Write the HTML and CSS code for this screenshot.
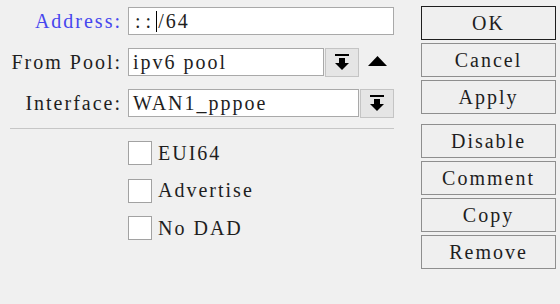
FILE: index.html
```html
<!DOCTYPE html>
<html>
<head>
<meta charset="utf-8">
<link rel="stylesheet" href="styles.css">
</head>
<body>
<div class="window">
  <div class="form">
    <div class="row">
      <div class="label label-active">Address:</div>
      <div class="input input-address"><span class="colons">::</span><span class="caret"></span>/64</div>
    </div>
    <div class="row">
      <div class="label">From Pool:</div>
      <div class="input input-pool">ipv6 pool</div>
      <div class="drop"><svg width="14" height="17" viewBox="0 0 14 17"><rect x="0" y="0" width="14" height="2" fill="#000"/><rect x="4" y="4" width="6" height="6" fill="#000"/><polygon points="0,9 14,9 7,16" fill="#000"/></svg></div>
      <svg class="up" width="19" height="10" viewBox="0 0 19 10"><polygon points="0,10 19,10 9.5,0" fill="#000"/></svg>
    </div>
    <div class="row">
      <div class="label">Interface:</div>
      <div class="input input-iface">WAN1_pppoe</div>
      <div class="drop"><svg width="14" height="17" viewBox="0 0 14 17"><rect x="0" y="0" width="14" height="2" fill="#000"/><rect x="4" y="4" width="6" height="6" fill="#000"/><polygon points="0,9 14,9 7,16" fill="#000"/></svg></div>
    </div>
    <div class="sep"></div>
    <div class="checks">
      <label class="check"><span class="box"></span><span>EUI64</span></label>
      <label class="check"><span class="box"></span><span>Advertise</span></label>
      <label class="check"><span class="box"></span><span>No DAD</span></label>
    </div>
  </div>
  <div class="buttons">
    <div class="group">
      <div class="btn btn-default">OK</div>
      <div class="btn">Cancel</div>
      <div class="btn">Apply</div>
    </div>
    <div class="group">
      <div class="btn">Disable</div>
      <div class="btn">Comment</div>
      <div class="btn">Copy</div>
      <div class="btn">Remove</div>
    </div>
  </div>
</div>
</body>
</html>
```

FILE: styles.css
```css
html, body {
  margin: 0;
  padding: 0;
  background: #f0f0f0;
}
body {
  width: 560px;
  height: 304px;
  overflow: hidden;
  font-family: "Liberation Serif", "DejaVu Serif", serif;
  font-size: 20px;
  letter-spacing: 2px;
  color: #1e1e1e;
}
.window {
  display: flex;
  padding: 6px 0 0 10px;
}
.form {
  width: 384px;
  padding-top: 1px;
  display: flex;
  flex-direction: column;
}
.row {
  display: flex;
  align-items: center;
  height: 28px;
  margin-bottom: 13px;
}
.row:nth-child(3) {
  margin-bottom: 0;
}
.label {
  width: 112px;
  text-align: right;
  margin-right: 6px;
  white-space: nowrap;
}
.label-active {
  color: #4646ee;
}
.input {
  box-sizing: border-box;
  height: 28px;
  background: #fff;
  border: 1px solid #a9a9a9;
  padding-left: 4px;
  display: flex;
  align-items: center;
  white-space: pre;
}
.colons {
  letter-spacing: 5px;
  padding-left: 2px;
}
.input-address { width: 266px; }
.input-pool { width: 196px; }
.input-iface { width: 231px; }
.caret {
  display: inline-block;
  width: 1px;
  height: 21px;
  background: #000;
  margin-right: 1px;
}
.drop {
  box-sizing: border-box;
  width: 34px;
  height: 29px;
  margin-left: 1px;
  background: #e5e5e5;
  border: 1px solid #c4c4c4;
  display: flex;
  align-items: center;
  justify-content: center;
}
.drop svg { display: block; }
.up {
  margin-left: 9px;
  margin-top: -3px;
  display: block;
}
.sep {
  height: 1px;
  background: #c6c6c6;
  margin-top: 11px;
}
.checks {
  margin-top: 12px;
  padding-left: 118px;
  display: flex;
  flex-direction: column;
  gap: 13.5px;
}
.check {
  display: flex;
  align-items: center;
  height: 24px;
}
.box {
  box-sizing: border-box;
  width: 24px;
  height: 24px;
  background: #fff;
  border: 1px solid #a2a2a2;
  margin-right: 6px;
}
.buttons {
  margin-left: 27px;
  width: 135px;
  display: flex;
  flex-direction: column;
  gap: 10px;
}
.group {
  display: flex;
  flex-direction: column;
  gap: 3px;
}
.btn {
  box-sizing: border-box;
  height: 34px;
  border: 1px solid #8e8e8e;
  background: #efefef;
  display: flex;
  align-items: center;
  justify-content: center;
  white-space: nowrap;
}
.btn-default {
  border-color: #1e1e1e;
}
```
